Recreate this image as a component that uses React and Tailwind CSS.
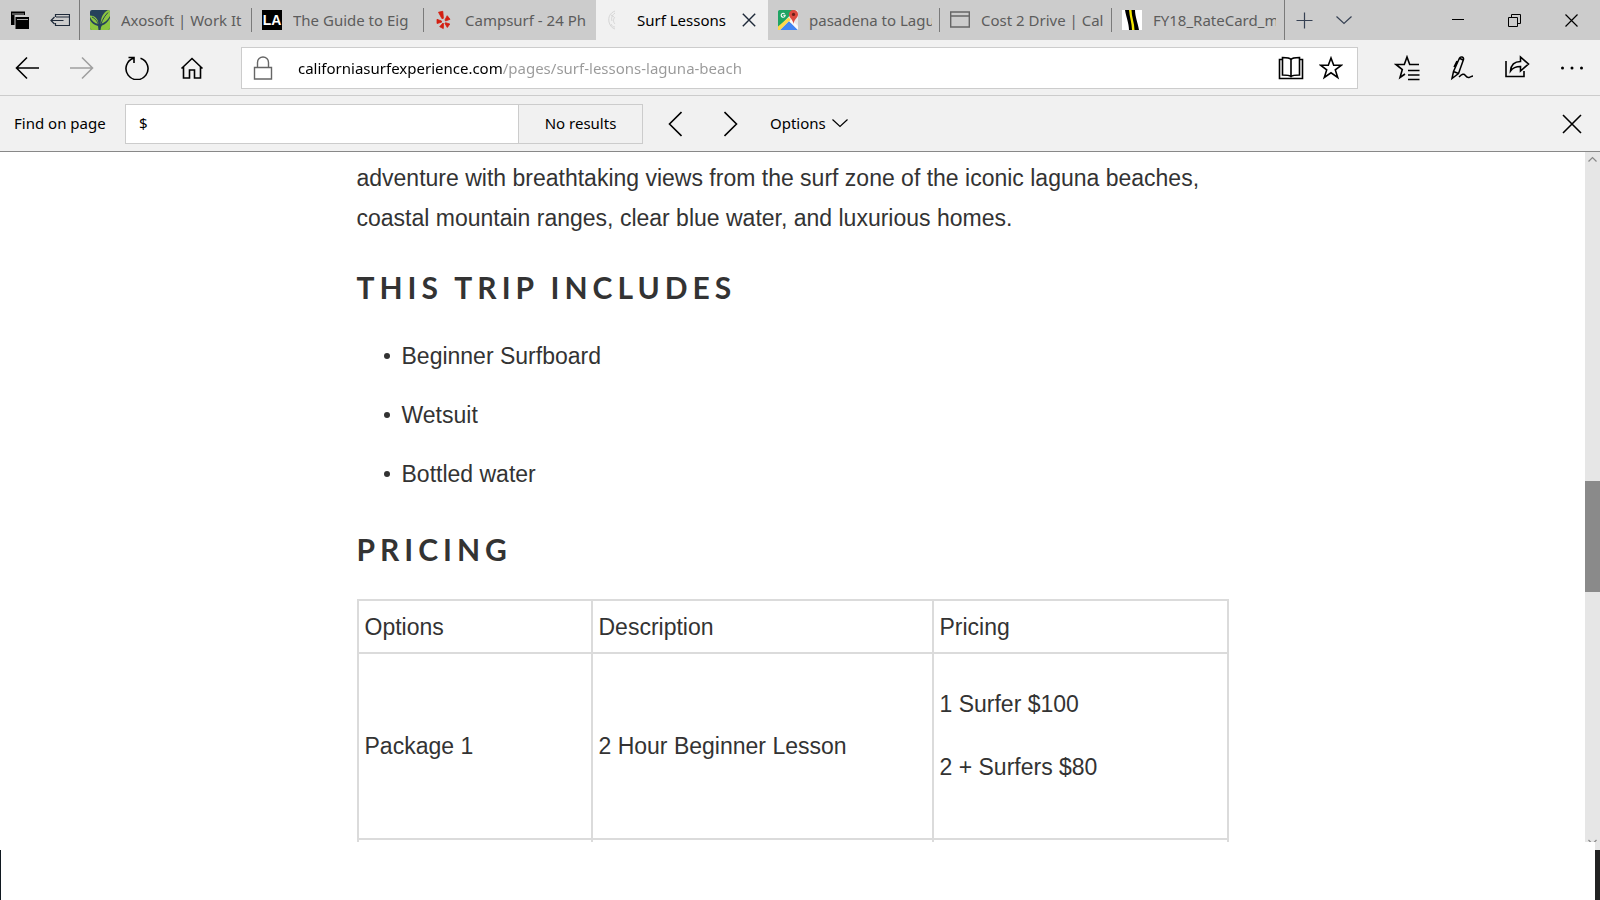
const ui = 'font-["Noto_Sans",sans-serif]';

function Icon({ w, h, children, sw = 1.4, className = '' }) {
  return (
    <svg width={w} height={h} viewBox={`0 0 ${w} ${h}`} fill="none" stroke="currentColor" strokeWidth={sw} className={`shrink-0 ${className}`} aria-hidden="true">
      {children}
    </svg>
  );
}

const TabsAside = () => (
  <Icon w={20} h={20} sw={0}>
    <path d="M1 1.500h14v3.500H4.500V15H1z" fill="#000" />
    <path d="M5.500 7h13.500v12H5.500z" fill="#000" />
    <path d="M2 4h12M7 9.500h11" stroke="#aaa" strokeWidth="1" />
  </Icon>
);
const SetAside = () => (
  <Icon w={20} h={20} sw={1.200} className="text-gray-800">
    <path d="M5.500 7V4.500h14v11h-14V13M6 7h13.500M1 10.500h12.500M4.500 7 1 10.500 4.500 14" />
  </Icon>
);
const Leaf = () => (
  <Icon w={20} h={20} sw={0}>
    <rect width="20" height="20" rx="2" fill="#26425b" />
    <path d="M18 0a2 2 0 0 1 2 2v4c-3 5-6 7-9.500 8C11 7 13 3 18 0z" fill="#8cc63f" />
    <path d="M20 8v10a2 2 0 0 1-2 2h-7.500c0-2 .500-3 1.500-4.500C16 14 18 11.500 20 8z" fill="#8cc63f" />
    <path d="M0 5.500c4.500 0 8 3 8.500 8.500C4.500 13.500 2 11 0 7z" fill="#8cc63f" />
    <path d="M0 10c1.500 3 4 5 8 6l.500 4H2a2 2 0 0 1-2-2z" fill="#8cc63f" />
    <path d="M18 2.500C13.500 7 10.500 13 9.500 20M2 7c3 1.500 5.500 4 7 9" stroke="#26425b" strokeWidth="1" />
  </Icon>
);
const LaMark = () => (
  <span className={'flex size-5 shrink-0 items-center justify-center bg-black text-sm font-bold leading-5 text-white font-["Liberation_Sans",sans-serif]'}>LA</span>
);
const Burst = () => (
  <Icon w={20} h={20} sw={0}>
    <g fill="#d32011" stroke="#d32011" strokeWidth=".800" strokeLinejoin="round">
      <path d="M4.500 2.200 8.800 1.300 9.400 8.300 8 8.700z" />
      <path d="M3 9.300 7.500 11 7.500 12.200 3 13.500z" />
      <path d="M9 13 9.500 13.500 9.300 18.600 5.700 16.700z" />
      <path d="M11.500 12.700 15.800 14 13.300 17.500 11 13.500z" />
      <path d="M11 9.800 13.200 5.700 16 9.300 11.500 11z" />
    </g>
  </Icon>
);
const Wave = () => (
  <Icon w={20} h={20} sw={1} className="text-[#d6d6d6]">
    <path d="M9 1C4 3 2 7 3 12c1 4 3 6 6 7M9 3c-3 2-4 5-3 8M9 7c-2 2-2 5 0 7M5 14c1 2 2 3 4 3M5 5l3 2" />
  </Icon>
);
const MapMark = () => (
  <Icon w={20} h={20} sw={0}>
    <rect width="20" height="20" rx="1.500" fill="#e8e8e8" />
    <path d="M0 1.500A1.500 1.500 0 0 1 1.500 0H17L0 18z" fill="#1fa463" />
    <path d="M2 20 11 11l9 9z" fill="#4285f4" />
    <path d="M0 16.500 10.500 7.500l4 4-1.500 1.500-2-2L2 20H0z" fill="#ffd84d" />
    <path d="M13 9l7 7v4l-8.500-8.500z" fill="#fafafa" />
    <path d="M15.500 0A4.300 4.300 0 0 1 20 4.400C20 8 16 9 15.500 14 15 9 11 8 11 4.400A4.300 4.300 0 0 1 15.500 0z" fill="#dd4b3e" />
    <circle cx="15.500" cy="4.400" r="1.600" fill="#6b1f18" />
    <path d="M6.600 3.800A2 2 0 1 0 7.200 5.300H5.300" stroke="#fff" strokeWidth="1.100" />
  </Icon>
);
const PageMark = () => (
  <Icon w={20} h={20} className="text-[#666]">
    <path d="M.700 2h18.600v15H.700zM.700 6h18.600" />
  </Icon>
);
const Stripes = () => (
  <Icon w={20} h={20} sw={0}>
    <path d="M0 0h20v20H0z" fill="#fff" />
    <path d="M3 0h10c0 7 3 13 4 20H7C7 13 4 7 3 0z" fill="#000" />
    <path d="M7 0h2.500c0 7 3 13 3 20H10C10 13 7.500 7 7 0z" fill="#f5e600" />
  </Icon>
);

const tabs = [
  { title: 'Axosoft | Work It', icon: <Leaf />, line: true },
  { title: 'The Guide to Eig', icon: <LaMark />, line: true },
  { title: 'Campsurf - 24 Ph', icon: <Burst /> },
  { title: 'Surf Lessons', icon: <Wave />, active: true },
  { title: 'pasadena to Lagu', icon: <MapMark />, line: true },
  { title: 'Cost 2 Drive | Cal', icon: <PageMark />, line: true },
  { title: 'FY18_RateCard_m', icon: <Stripes /> },
];

function Tab({ title, icon, line, active }) {
  return (
    <div className={`flex h-10 w-43 min-w-0 items-center ${active ? 'bg-[#f1f1f1] text-black' : 'text-[#5c5c5c]'}`}>
      <button type="button" role="tab" aria-selected={!!active} className="flex min-w-0 flex-1 items-center gap-[11px] pl-[10px] text-left">
        {icon}
        <span className="flex-1 overflow-hidden whitespace-nowrap">{title}</span>
      </button>
      {active ? (
        <button type="button" aria-label="Close tab" className="flex h-10 w-[39px] items-center justify-center text-gray-800">
          <Icon w={14} h={14}><path d="m.800.800 12.400 12.400M13.200.800.800 13.200" /></Icon>
        </button>
      ) : (
        <span className={`ml-[7px] h-6 w-px ${line ? 'bg-[#7a7a7a]' : ''}`} />
      )}
    </div>
  );
}

function IconButton({ label, className, children }) {
  return (
    <button type="button" aria-label={label} className={`flex h-10 shrink-0 items-center justify-center ${className}`}>
      {children}
    </button>
  );
}

function TabBar() {
  return (
    <header className="flex h-10 shrink-0 bg-[#ccc]">
      <div className="flex w-20 shrink-0 border-r border-[#7a7a7a]">
        <IconButton label="Tabs you've set aside" className="w-10"><TabsAside /></IconButton>
        <IconButton label="Set these tabs aside" className="w-10"><SetAside /></IconButton>
      </div>
      <div role="tablist" className="flex min-w-0 border-r border-[#7a7a7a]">
        {tabs.map((t) => <Tab key={t.title} {...t} />)}
      </div>
      <IconButton label="New tab" className="w-[39px] text-gray-700"><Icon w={17} h={17} sw={1.200}><path d="M8.500.500v16M.500 8.500h16" /></Icon></IconButton>
      <IconButton label="Tab previews" className="w-[39px] text-gray-700"><Icon w={16} h={10} sw={1.200}><path d="m.500 1.500 7.500 7 7.500-7" /></Icon></IconButton>
      <div className="ml-auto flex">
        <IconButton label="Minimise" className="w-[57px]"><Icon w={12} h={12} sw={1}><path d="M0 5.500h12" /></Icon></IconButton>
        <IconButton label="Restore" className="w-[57px]"><Icon w={13} h={13} sw={1}><path d="M.500 3.500h9v9h-9zM3.500 3.500v-3h9v9h-3" /></Icon></IconButton>
        <IconButton label="Close window" className="w-[57px]"><Icon w={13} h={13} sw={1.200}><path d="m.500.500 12 12M12.500.500l-12 12" /></Icon></IconButton>
      </div>
    </header>
  );
}

function Toolbar() {
  return (
    <nav className="flex h-14 shrink-0 items-center border-b border-[#ccc] pr-px">
      <IconButton label="Back" className="w-[54px]"><Icon w={24} h={24} sw={1.600}><path d="M12 1.500 1.500 12 12 22.500M1.500 12H24" /></Icon></IconButton>
      <IconButton label="Forward" className="w-[55px] text-[#a0a0a0]"><Icon w={24} h={24} sw={1.600}><path d="M12 1.500 22.500 12 12 22.500M22.500 12H0" /></Icon></IconButton>
      <IconButton label="Refresh" className="w-[55px]"><Icon w={24} h={24} sw={1.600}><path d="M15.500 2.200A11 11 0 1 1 8.500 2.200M3.500 1.500h5.500V7" /></Icon></IconButton>
      <IconButton label="Home" className="w-[55px]"><Icon w={24} h={24} sw={1.600}><path d="M1.500 12.500 12 2.500l10.500 10M3.500 11v11h6v-8h5v8h6V11" /></Icon></IconButton>
      <form className="ml-[22px] flex h-[42px] min-w-0 flex-1 items-center border border-[#ccc] bg-white pr-[6px]">
        <Icon w={20} h={24} className="ml-[11px] text-[#666]"><path d="M1.500 11.500h17v11.500h-17zM4.500 11V6.500a5.500 5.500 0 0 1 11 0V11" /></Icon>
        <input
          aria-label="Address"
          defaultValue="californiasurfexperience.com/pages/surf-lessons-laguna-beach"
          className="ml-[25px] h-8 min-w-0 flex-1 bg-[linear-gradient(to_right,#000_204px,#999_204px)] bg-clip-text text-black outline-none [-webkit-text-fill-color:transparent]"
        />
        <IconButton label="Reading view" className="w-10">
          <Icon w={26} h={24} sw={1.600}><path d="M13 3.500v17M13 3.500C12 2 8 1.500 4.500 1.500v17.500C8 19 12 19.500 13 20.500c1-1 5-1.500 8.500-1.500V1.500C18 1.500 14 2 13 3.500zM4.500 3.500H1.500v19h23v-19h-3" /></Icon>
        </IconButton>
        <IconButton label="Add to favourites" className="w-10">
          <Icon w={24} h={24} sw={1.600}><path d="m12 2 2.700 7.200h7.800l-6.200 4.700 2.400 7.600-6.700-4.700-6.700 4.700 2.400-7.600L1.500 9.200h7.800z" /></Icon>
        </IconButton>
      </form>
      <div className="ml-[21px] flex">
        <IconButton label="Favourites" className="w-[55px]">
          <Icon w={26} h={26} sw={1.600}><path d="M25 9.500h-9.300L13 2l-2.700 7.500H2l6.300 5-2.300 8 5-3.500M14 15.500h11.500M14 20h11.500M14 24.500h11.500" /></Icon>
        </IconButton>
        <IconButton label="Add notes" className="w-[55px]">
          <Icon w={24} h={26} sw={1.500}><path d="M2 23.500 3.500 16.500 9.500 3c1-2 4.500-1 4 1.500L8.500 18.500zM3.500 16.500l5 2M7 6 4 12M10 3.500l3 1.500M9 22c3-3 5-3.500 6-2 1.500 2 2 3 4 2.500 2-.500 2.500-1.500 4-1.500" /></Icon>
        </IconButton>
        <IconButton label="Share" className="w-[55px]">
          <Icon w={26} h={26} sw={1.600}><path d="M2 6v15.500h18V16M6.500 16c.500-6 4-9.500 10-9.500V2l8 7-8 7v-4.500c-4.500 0-7.500 1-10 4.500z" /></Icon>
        </IconButton>
        <IconButton label="More" className="w-[55px]">
          <Icon w={24} h={4} sw={0}><g fill="currentColor"><circle cx="2.500" cy="2" r="1.500" /><circle cx="12" cy="2" r="1.500" /><circle cx="21.500" cy="2" r="1.500" /></g></Icon>
        </IconButton>
      </div>
    </nav>
  );
}

function FindBar() {
  return (
    <form role="search" className="flex h-14 shrink-0 items-center border-b border-[#888]">
      <label htmlFor="find" className="w-[125px] shrink-0 whitespace-nowrap pb-[2px] pl-[14px]">Find on page</label>
      <input id="find" defaultValue="$" className="h-10 w-[394px] min-w-0 border border-[#ccc] bg-white px-[13px] pb-[2px] outline-none" />
      <output htmlFor="find" className="flex h-10 w-[124px] shrink-0 items-center justify-center border border-l-0 border-[#ccc] pb-[2px]">No results</output>
      <div className="ml-1 flex">
        <IconButton label="Previous match" className="w-14"><Icon w={14} h={26} sw={1.600}><path d="M13.500 1 1.500 13l12 12" /></Icon></IconButton>
        <IconButton label="Next match" className="w-14"><Icon w={14} h={26} sw={1.600}><path d="m.500 1 12 12-12 12" /></Icon></IconButton>
      </div>
      <button type="button" className="ml-[11px] flex h-10 items-center gap-[6px] pb-[2px]">
        Options
        <Icon w={16} h={10} sw={1.200}><path d="m.500 1.500 7.500 7 7.500-7" /></Icon>
      </button>
      <IconButton label="Close find bar" className="ml-auto w-14"><Icon w={20} h={20} sw={1.600}><path d="m1 1 18 18M19 1 1 19" /></Icon></IconButton>
    </form>
  );
}

const heading = 'text-[30px] leading-10 font-bold tracking-[5px] uppercase font-["Lato",sans-serif]';
const cell = 'border-2 border-[#dbdbdb] px-[6px] text-left font-normal';

function Article() {
  return (
    <article className={'mx-auto max-w-[872px] pt-[6px] text-[23px] leading-10 text-[#333] font-["Liberation_Sans",sans-serif]'}>
      <p>
        adventure with breathtaking views from the surf zone of the iconic laguna beaches, coastal mountain ranges, clear blue water, and luxurious homes.
      </p>
      <h2 className={`mt-[29px] ${heading}`}>This trip includes</h2>
      <ul className="mt-[29px] flex list-none flex-col gap-[19px] pl-[27px]">
        {['Beginner Surfboard', 'Wetsuit', 'Bottled water'].map((item) => (
          <li key={item} className="flex items-center gap-3">
            <span className="size-[6px] rounded-full bg-[#333]" />
            {item}
          </li>
        ))}
      </ul>
      <h2 className={`mt-[35px] ${heading}`}>Pricing</h2>
      <table className="mt-[30px] w-full table-fixed border-collapse">
        <colgroup>
          <col className="w-[234px]" />
          <col className="w-[341px]" />
          <col />
        </colgroup>
        <thead>
          <tr className="h-[53px]">
            <th scope="col" className={cell}>Options</th>
            <th scope="col" className={cell}>Description</th>
            <th scope="col" className={cell}>Pricing</th>
          </tr>
        </thead>
        <tbody>
          <tr>
            <td className={cell}>Package 1</td>
            <td className={cell}>2 Hour Beginner Lesson</td>
            <td className={`${cell} pt-[30px] pb-[51px]`}>
              <p className="mb-[23px]">1 Surfer $100</p>
              <p>2 + Surfers $80</p>
            </td>
          </tr>
          <tr className="h-[186px]">
            <td className={cell} />
            <td className={cell} />
            <td className={cell} />
          </tr>
        </tbody>
      </table>
    </article>
  );
}

function Scrollbar() {
  return (
    <div className="flex w-[15px] shrink-0 flex-col items-center overflow-hidden bg-[#e6e6e6] text-[#888]" aria-hidden="true">
      <Icon w={9} h={15} sw={1.200}><path d="m.500 9.500 4-4 4 4" /></Icon>
      <span className="grow-[314]" />
      <span className="w-full grow-[111] bg-[#8a8a8a]" />
      <span className="grow-[247]" />
      <Icon w={9} h={3} sw={1.200}><path d="m.500 1 4 4 4-4" /></Icon>
    </div>
  );
}

export default function App() {
  return (
    <div className={`flex h-screen flex-col overflow-hidden bg-[#f1f1f1] text-[15px] leading-6 text-black ${ui}`}>
      <TabBar />
      <Toolbar />
      <FindBar />
      <div className="flex min-h-0 flex-1 bg-white">
        <main className="min-w-0 flex-1 overflow-hidden">
          <Article />
        </main>
        <Scrollbar />
      </div>
      <footer className="flex h-[58px] shrink-0 justify-between bg-white">
        <span className="mt-2 w-px bg-[#101820]" />
        <span className="w-[5px] border-t-8 border-[#e6e6e6] bg-[#222]" />
      </footer>
    </div>
  );
}
